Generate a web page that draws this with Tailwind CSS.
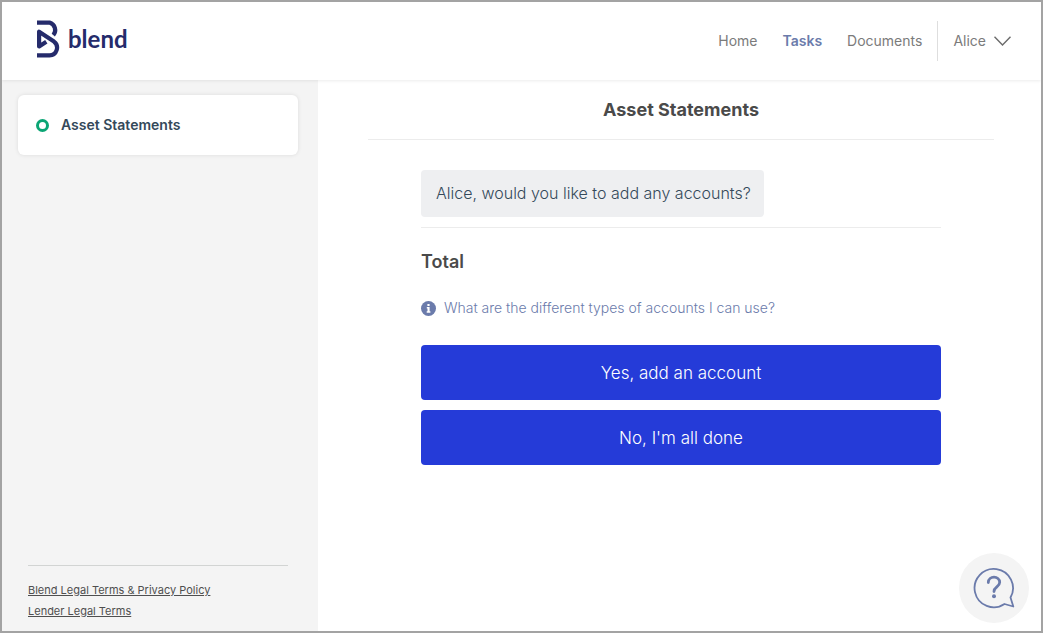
<!DOCTYPE html>
<html lang="en">
<head>
<meta charset="utf-8">
<meta name="viewport" content="width=device-width, initial-scale=1">
<title>Asset Statements</title>
<script src="https://cdn.jsdelivr.net/npm/@tailwindcss/browser@4"></script>
</head>
<body class="flex min-h-screen flex-col border-2 border-[#a3a3a3] bg-white font-['Inter',sans-serif] text-[#4a4a4a]">
  <header class="relative flex h-[78px] items-center justify-between bg-white pr-[30px] pl-[35px] shadow-[0_1px_3px_rgba(0,0,0,0.08)]">
    <a href="#" aria-label="blend" class="flex items-center gap-2 pb-1 text-[#252b6b]">
      <svg class="h-[38px] w-[23px]" viewBox="0 0 23 38" fill="none" stroke="currentColor" stroke-width="4.200">
        <path d="M0 2.600H12.500A7.800 7.800 0 0 1 16.300 15.200"/>
        <path d="M0 35.400H12.500A7.700 7.700 0 0 0 17 21.600L2.100 11.700V26.500L9.300 21.800" stroke-linejoin="round"/>
      </svg>
      <span class="font-[Lato,sans-serif] text-2xl leading-8 font-bold">blend</span>
    </a>
    <nav class="flex items-center text-sm text-[#7b7b7b]">
      <a href="#" class="mr-[25px]">Home</a>
      <a href="#" class="mr-[25px] font-semibold text-[#6b7bab]">Tasks</a>
      <a href="#" class="mr-[15px]">Documents</a>
      <button type="button" class="flex h-10 items-center gap-2 border-l border-[#dedede] pl-[15px]">Alice
        <svg class="h-[10px] w-[17px]" viewBox="0 0 17 10" fill="none" stroke="#6b6b6b" stroke-width="1.400"><path d="M.5.7 8.500 9 16.500.7"/></svg>
      </button>
    </nav>
  </header>
  <div class="flex flex-1">
    <aside class="flex w-[316px] shrink-0 flex-col justify-between bg-[#f4f4f4]">
      <a href="#" class="mt-[15px] mr-5 ml-4 flex h-[60px] items-center gap-3 rounded-md bg-white pl-[18px] text-sm font-semibold text-[#34495a] shadow-[0_0_4px_rgba(0,0,0,0.1)]">
        <span class="size-[13px] rounded-full border-3 border-[#0ba574]"></span>Asset Statements
      </a>
      <footer class="mr-[30px] mb-[9px] ml-[26px] flex flex-col items-start border-t border-[#d2d4d3] pt-[14px] text-[11px] leading-[21px] text-[#4f4f4f]">
        <a href="#" class="underline">Blend Legal Terms &amp; Privacy Policy</a>
        <a href="#" class="underline">Lender Legal Terms</a>
      </footer>
    </aside>
    <main class="flex-1 pr-[47px] pl-[50px]">
      <h1 class="border-b border-[#ececec] pt-[16px] pb-[15px] text-center text-lg leading-7 font-bold">Asset Statements</h1>
      <section class="mx-auto mt-[30px] flex max-w-[520px] flex-col">
        <p class="self-start rounded bg-[#eeeff1] py-[11px] pr-[13px] pl-[15px] text-base leading-[25px] font-light text-[#34495a]">Alice, would you like to add any accounts?</p>
        <h2 class="mt-[10px] border-t border-[#ececec] pt-5 text-lg leading-7 font-semibold">Total</h2>
        <a href="#" class="mt-5 flex items-center gap-2 self-start text-sm leading-6 font-light text-[#6b7bab]">
          <svg class="size-[15px]" viewBox="0 0 15 15"><circle cx="7.500" cy="7.500" r="7.500" fill="#6b7bab"/><path d="M6.400 3h2.200v2H6.400zM5.800 6h2.800v4.300h.8v1.400H5.700v-1.400h.8V7.400h-.7z" fill="#fff"/></svg>
          What are the different types of accounts I can use?
        </a>
        <button type="button" class="mt-[25px] h-[55px] rounded bg-[#253bd8] pt-[2px] text-[17px] font-light text-white">Yes, add an account</button>
        <button type="button" class="mt-[10px] h-[55px] rounded bg-[#253bd8] pt-[2px] text-[17px] font-light text-white">No, I'm all done</button>
      </section>
    </main>
  </div>
  <button type="button" aria-label="Help" class="fixed right-[14px] bottom-[10px] flex size-[70px] items-center justify-center rounded-full bg-[#f4f4f4]">
    <svg class="size-[42px]" viewBox="0 0 42 42" fill="none" stroke="#6b7bab" stroke-width="1.800" stroke-linejoin="round"><path d="M37.500 30.500A19.200 19.200 0 1 0 31.500 37L40.300 39.500Z"/><path d="M15.300 15.500C15.300 8.500 26.700 8.500 26.700 15.300C26.700 20 21 19.800 21 24.500" stroke-width="2.800" stroke-linecap="round"/><circle cx="21" cy="29.300" r="2" fill="#6b7bab" stroke="none"/></svg>
  </button>
</body>
</html>
